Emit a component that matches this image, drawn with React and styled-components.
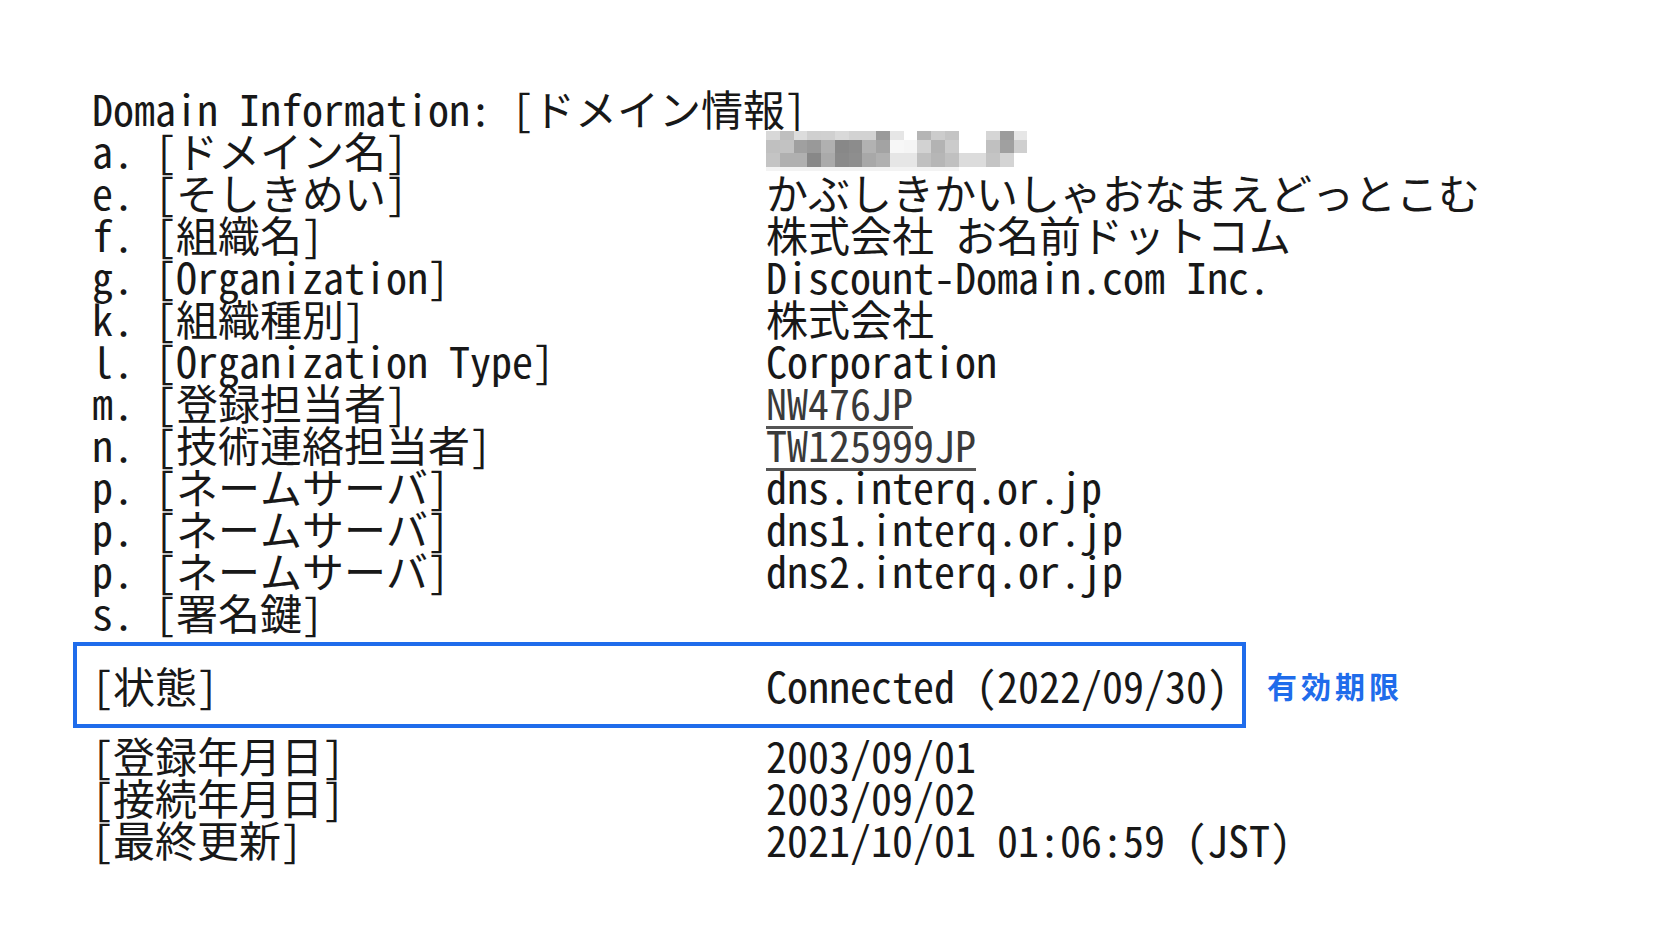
import styled, {createGlobalStyle} from "styled-components"

const GlobalStyle = createGlobalStyle`
  html, body {
    margin: 0;
    background: #fff;
  }
`

const Page = styled.div`
  box-sizing: border-box;
  width: 1680px;
  height: 952px;
  padding: 87px 0 0 92px;
  font-family: "Noto Sans Mono CJK JP", "Noto Sans CJK JP", monospace;
  font-size: 42px;
  font-weight: 300;
  line-height: 42px;
  color: #181818;
`

const Line = styled.div`
  height: 42px;
  white-space: pre;
`

const Row = styled.div`
  display: grid;
  grid-template-columns: 674px auto;
  align-items: center;
  height: 42px;
  white-space: pre;
`

const Label = styled.span``

const Value = styled.span``

const HandleLink = styled.span`
  color: #3a3a3a;
  text-decoration: underline;
  text-decoration-color: #555;
  text-decoration-thickness: 3px;
  text-underline-offset: 6px;
`

const Mosaic = styled.div`
  display: grid;
  grid-template-columns: repeat(19, 13.75px);
  grid-template-rows: 9px 13px 14px 4px;
  width: 261px;
  margin-top: 2px;
`

const Cell = styled.div`
  background: ${props => props.shade};
`

const StatusLine = styled.div`
  display: flex;
  align-items: center;
  gap: 21px;
  margin: 9px 0 6px -19px;
`

const StatusBox = styled.div`
  box-sizing: border-box;
  width: 1173px;
  padding: 18px 0 18px 15px;
  border: 4px solid #1f6ceb;
`

const ExpiryTag = styled.span`
  font-family: "Noto Sans CJK JP", sans-serif;
  font-size: 30px;
  font-weight: 700;
  line-height: 1;
  letter-spacing: 4px;
  color: #1f6ceb;
`

// pixelated (hidden) domain name, column by column: top, middle, bottom shades
const MOSAIC_COLUMNS = [
  ["#d8d8d8", "#c0c0c0", "#c4c4c4"],
  ["#bfbfbf", "#c2c2c2", "#b0b0b0"],
  ["#dcdcdc", "#a0a0a0", "#b0b0b0"],
  ["#cfcfcf", "#999999", "#888888"],
  ["#d0d0d0", "#b0b0b0", "#aaaaaa"],
  ["#d9d9d9", "#888888", "#8a8a8a"],
  ["#d2d2d2", "#8c8c8c", "#8e8e8e"],
  ["#d2d2d2", "#b2b2b2", "#a8a8a8"],
  ["#9a9a9a", "#a3a3a3", "#b0b0b0"],
  ["#e6e6e6", "#f7f7f7", "#e6e6e6"],
  ["#ffffff", "#f5f5f5", "#e6e6e6"],
  ["#b5b5b5", "#d2d2d2", "#c0c0c0"],
  ["#cccccc", "#b3b3b3", "#b6b6b6"],
  ["#c4c4c4", "#cbcbcb", "#c0c0c0"],
  ["#ffffff", "#ffffff", "#dcdcdc"],
  ["#ffffff", "#ffffff", "#dcdcdc"],
  ["#d5d5d5", "#c0c0c0", "#c4c4c4"],
  ["#9c9c9c", "#a0a0a0", "#d4d4d4"],
  ["#e6e6e6", "#cfcfcf", "#ffffff"]
]

const MOSAIC = [0, 1, 2, 3].map(r =>
  MOSAIC_COLUMNS.map((col, c) => (r < 3 ? col[r] : c < 14 ? "#f3f3f3" : "#ffffff"))
)

const rows = [
  ["e. [そしきめい]", "かぶしきかいしゃおなまえどっとこむ"],
  ["f. [組織名]", "株式会社 お名前ドットコム"],
  ["g. [Organization]", "Discount-Domain.com Inc."],
  ["k. [組織種別]", "株式会社"],
  ["l. [Organization Type]", "Corporation"],
  ["m. [登録担当者]", <HandleLink>NW476JP</HandleLink>],
  ["n. [技術連絡担当者]", <HandleLink>TW125999JP</HandleLink>],
  ["p. [ネームサーバ]", "dns.interq.or.jp"],
  ["p. [ネームサーバ]", "dns1.interq.or.jp"],
  ["p. [ネームサーバ]", "dns2.interq.or.jp"],
  ["s. [署名鍵]", ""]
]

const dates = [
  ["[登録年月日]", "2003/09/01"],
  ["[接続年月日]", "2003/09/02"],
  ["[最終更新]", "2021/10/01 01:06:59 (JST)"]
]

export default function App() {
  return (
    <>
      <GlobalStyle />
      <Page>
        <Line>Domain Information: [ドメイン情報]</Line>
        <Row>
          <Label>a. [ドメイン名]</Label>
          <Mosaic>
            {MOSAIC.flat().map((shade, i) => <Cell key={i} shade={shade} />)}
          </Mosaic>
        </Row>
        {rows.map(([label, value], i) => (
          <Row key={i}>
            <Label>{label}</Label>
            <Value>{value}</Value>
          </Row>
        ))}
        <StatusLine>
          <StatusBox>
            <Row>
              <Label>[状態]</Label>
              <Value>Connected (2022/09/30)</Value>
            </Row>
          </StatusBox>
          <ExpiryTag>有効期限</ExpiryTag>
        </StatusLine>
        {dates.map(([label, value], i) => (
          <Row key={i}>
            <Label>{label}</Label>
            <Value>{value}</Value>
          </Row>
        ))}
      </Page>
    </>
  )
}
